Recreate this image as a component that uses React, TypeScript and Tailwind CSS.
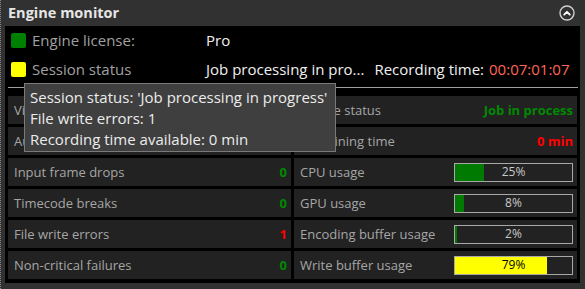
import React from "react";

const font = { fontFamily: '"Open Sans", "Noto Sans", sans-serif' };

function Cell({ label, value, color }: { label: string; value?: string; color?: string }) {
  return (
    <div className="h-[28px] bg-[#222222] flex items-center justify-between pl-[6px] pr-[4px]">
      <span className="text-[13px] text-[#a6a6a6] leading-none">{label}</span>
      {value !== undefined && (
        <span className={`text-[13px] font-bold leading-none ${color}`}>{value}</span>
      )}
    </div>
  );
}

function BarCell({ label, pct, yellow }: { label: string; pct: number; yellow?: boolean }) {
  return (
    <div className="h-[28px] bg-[#222222] flex items-center justify-between pl-[6px] pr-[4px]">
      <span className="text-[13px] text-[#a6a6a6] leading-none">{label}</span>
      <div className="relative w-[119px] h-[19px] border border-[#a8a8a8] bg-[#222222]">
        <div
          className={`absolute left-0 top-0 bottom-0 ${yellow ? "bg-[#ffff00]" : "bg-[#007a00]"}`}
          style={{ width: `${pct}%` }}
        />
        <div
          className={`absolute inset-0 flex items-center justify-center text-[12px] leading-none ${
            yellow ? "text-black" : "text-[#c8c8c8]"
          }`}
        >
          {pct}%
        </div>
      </div>
    </div>
  );
}

export default function App() {
  return (
    <div
      className="relative w-[585px] h-[289px] bg-[#313131] border-l border-dotted border-[#8a8a8a] overflow-hidden"
      style={font}
    >
      <div className="h-[26px] flex items-center justify-between pl-[7px] pr-[10px]">
        <span className="text-[14.5px] font-bold text-[#e6e6e6] leading-none">Engine monitor</span>
        <svg width="16" height="16" viewBox="0 0 16 16">
          <circle cx="8" cy="8" r="7" fill="none" stroke="#d0d0d0" strokeWidth="1.4" />
          <path d="M5.2 9.6 L8 6.8 L10.8 9.6" fill="none" stroke="#ffffff" strokeWidth="1.8" strokeLinecap="round" strokeLinejoin="round" />
        </svg>
      </div>
      <div className="ml-[4px] w-[575px] h-[257px] bg-black flex flex-col px-[3px]">
        <div className="h-[29px] flex items-center pl-[3px] text-[15px] leading-none">
          <div className="w-[15px] h-[15px] bg-[#008000] rounded-[2px]" />
          <span className="ml-[6px] w-[174px] text-[#a0a0a0]">Engine license:</span>
          <span className="text-[#f0f0f0]">Pro</span>
        </div>
        <div className="h-[29px] flex items-center pl-[3px] text-[15px] leading-none">
          <div className="w-[15px] h-[15px] bg-[#ffff00] rounded-[2px]" />
          <span className="ml-[6px] w-[174px] text-[#a0a0a0]">Session status</span>
          <span className="text-[#f0f0f0]">Job processing in pro...</span>
          <span className="ml-[10px] text-[#f0f0f0]">Recording time:</span>
          <span className="ml-[5px] text-[#ff6655]">00:07:01:07</span>
        </div>
        <div className="mt-[3px] h-px bg-[#a0a0a0] mr-[-1px]" />
        <div className="mt-[8px] grid grid-cols-2 gap-[3px]">
          <Cell label="Video input" value="OK" color="text-[#008a00]" />
          <Cell label="Engine status" value="Job in process" color="text-[#008a00]" />
          <Cell label="Audio input" value="OK" color="text-[#008a00]" />
          <Cell label="Remaining time" value="0 min" color="text-[#ff0000]" />
          <Cell label="Input frame drops" value="0" color="text-[#008a00]" />
          <BarCell label="CPU usage" pct={25} />
          <Cell label="Timecode breaks" value="0" color="text-[#008a00]" />
          <BarCell label="GPU usage" pct={8} />
          <Cell label="File write errors" value="1" color="text-[#ff0000]" />
          <BarCell label="Encoding buffer usage" pct={2} />
          <Cell label="Non-critical failures" value="0" color="text-[#008a00]" />
          <BarCell label="Write buffer usage" pct={79} yellow />
        </div>
      </div>
      <div className="absolute left-[23px] top-[83px] w-[312px] h-[69px] bg-[#3f3f3f] border border-[#7a7a7a] pl-[5px] pt-[3px] text-[15px] leading-[21px] text-[#ececec]">
        <div>Session status: 'Job processing in progress'</div>
        <div>File write errors: 1</div>
        <div>Recording time available: 0 min</div>
      </div>
    </div>
  );
}
